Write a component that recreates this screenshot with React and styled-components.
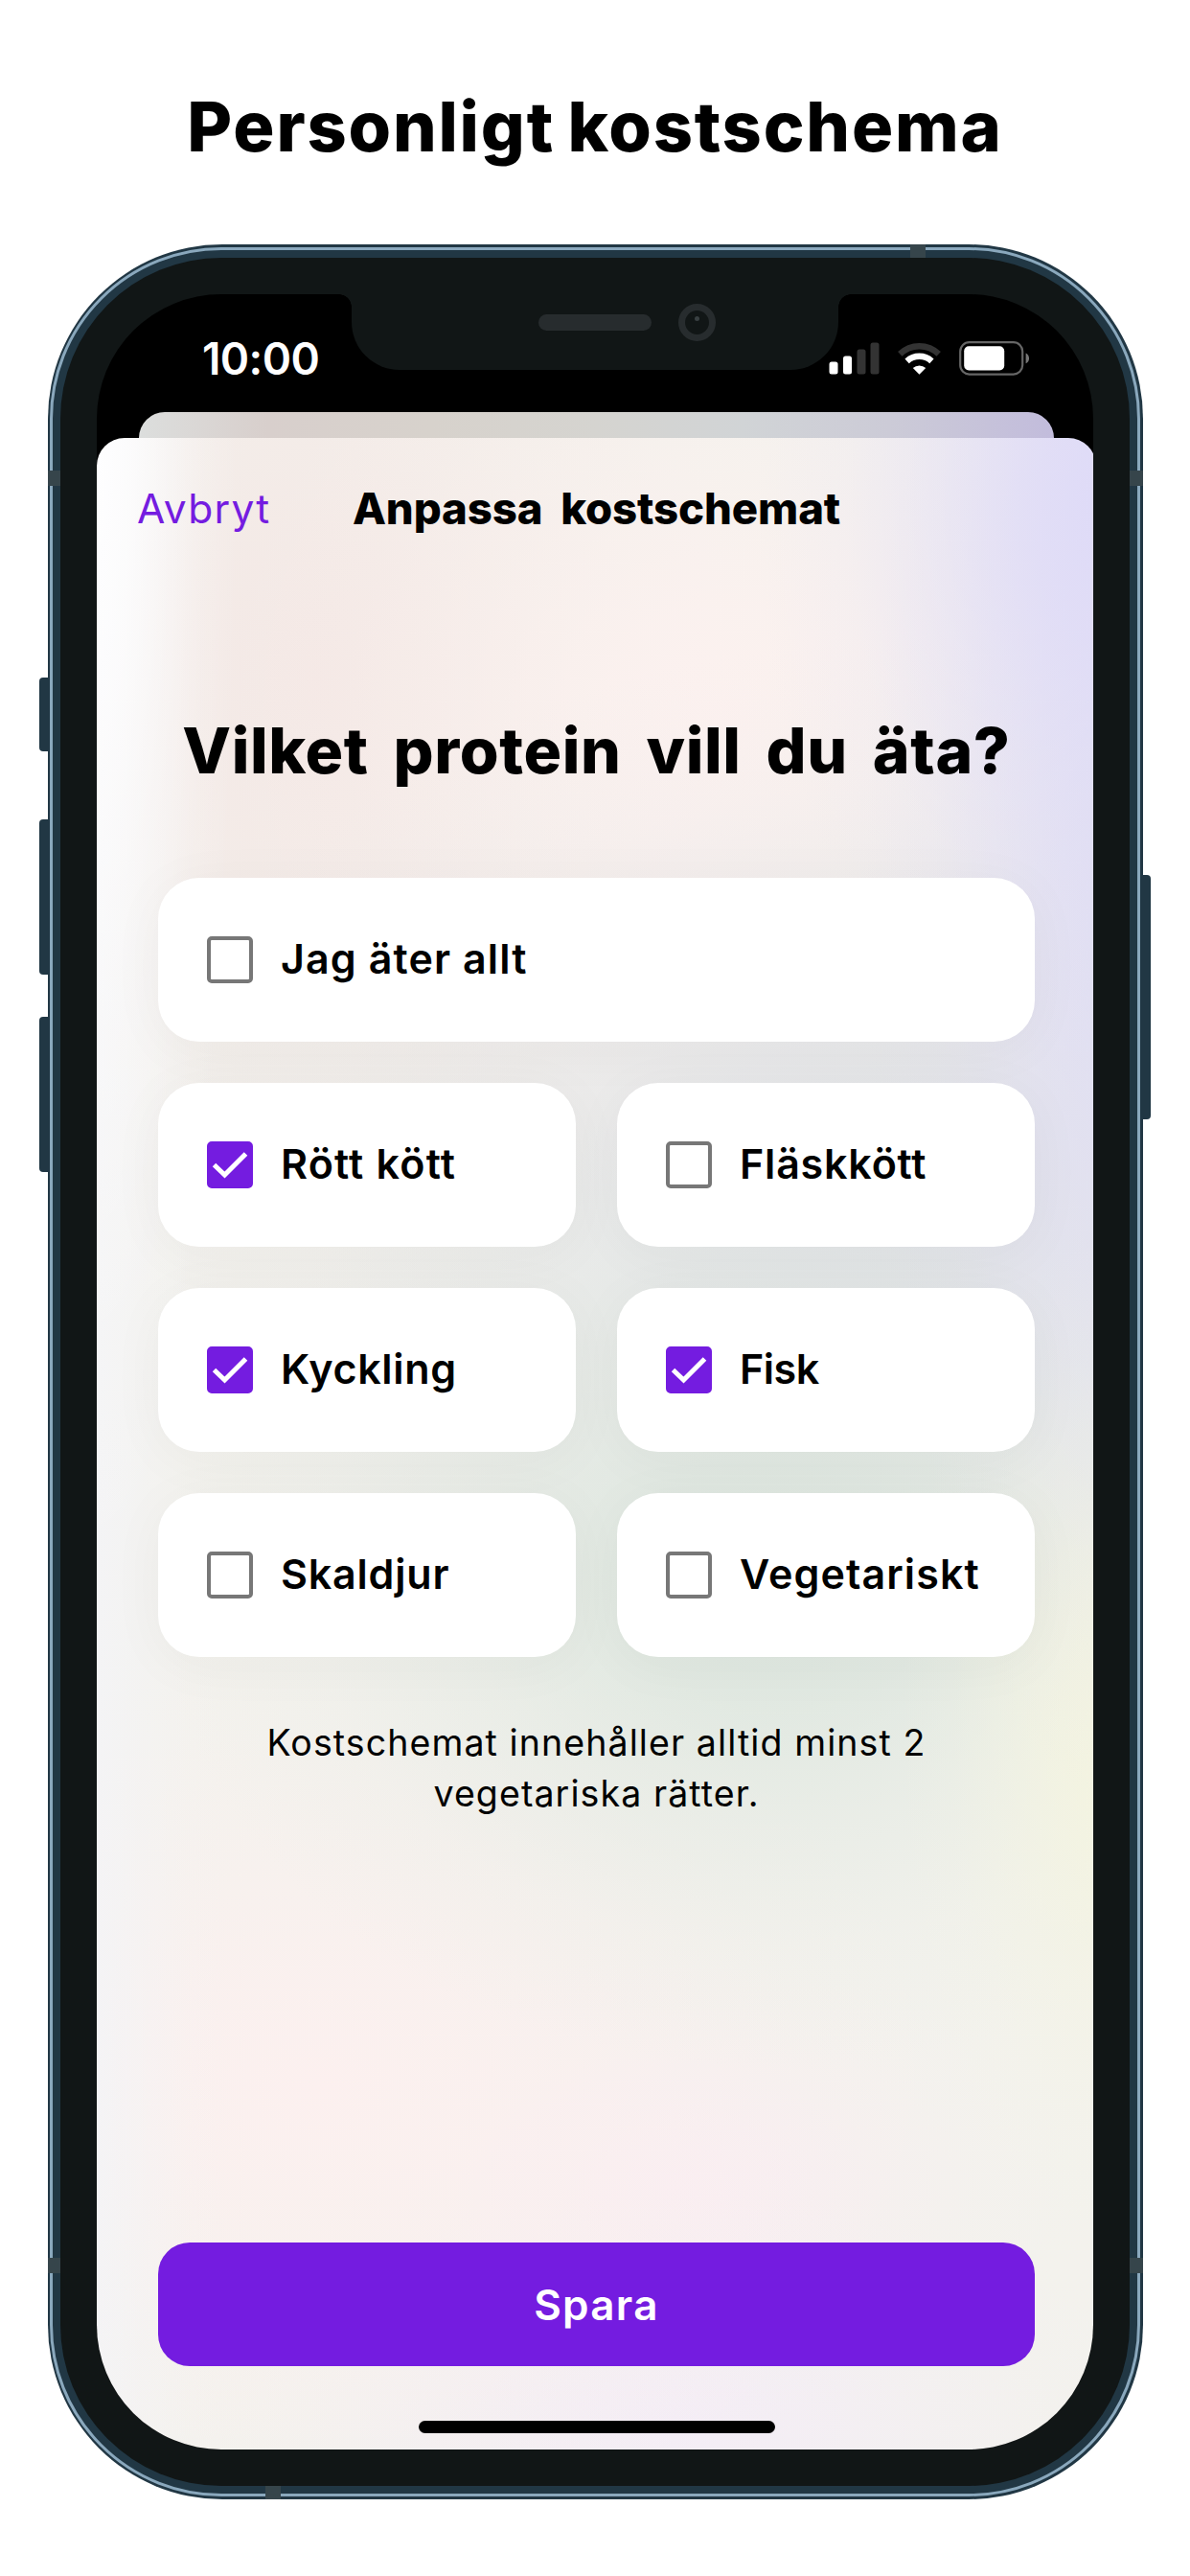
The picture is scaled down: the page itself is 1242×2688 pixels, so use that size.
import React, { useState } from "react";
import styled, { createGlobalStyle } from "styled-components";

const color = {
  accent: "#741ce0",
  ink: "#000",
  frame: "#213744",
  frameShine: "#8aa8bd",
  bezel: "#111616",
  antenna: "#36454b",
};

const glow = (size, at, rgb, strength = 1) =>
  `radial-gradient(${size} at ${at}, rgba(${rgb}, ${strength}) 0%, rgba(${rgb}, ${0.75 * strength}) 25%, rgba(${rgb}, ${0.4 * strength}) 50%, rgba(${rgb}, ${0.12 * strength}) 75%, rgba(${rgb}, 0) 100%)`;

const GlobalStyle = createGlobalStyle`
  *, *::before, *::after { box-sizing: border-box; }
  body {
    margin: 0;
    background: #fff;
    color: ${color.ink};
    font-family: Inter, "Liberation Sans", sans-serif;
  }
`;

const Page = styled.main`
  height: 2688px;
  display: flex;
  flex-direction: column;
  align-items: center;
`;

const Headline = styled.h1`
  margin: 87px 0 79px;
  font-size: 72px;
  line-height: 89px;
  font-weight: 800;
  letter-spacing: 1.8px;
  word-spacing: -4px;
  white-space: nowrap;
`;

const Device = styled.div`
  position: relative;
  width: 1143px;
  height: 2353px;
  padding: 3px 2.5px;
  background: ${color.frame};
  border-radius: 182px;
`;

const Ring = styled.div`
  height: 100%;
  padding: 8px;
  border: 3px solid ${color.frameShine};
  border-radius: 179px;
  background: ${color.frame};
`;

const Bezel = styled.div`
  height: 100%;
  padding: 38px;
  border-radius: 168px;
  background: ${color.bezel};
`;

const SideButton = styled.span`
  position: absolute;
  ${(p) => p.$side}: -8.5px;
  top: ${(p) => p.$top}px;
  width: 9px;
  height: ${(p) => p.$length}px;
  background: ${color.frame};
  border-radius: ${(p) => (p.$side === "left" ? "4px 0 0 4px" : "0 4px 4px 0")};
`;

const AntennaBand = styled.span`
  position: absolute;
  ${(p) => p.$edge}: 0;
  ${(p) => (p.$edge === "left" || p.$edge === "right" ? "top" : "left")}: ${(p) => p.$at}px;
  width: ${(p) => (p.$edge === "left" || p.$edge === "right" ? 13.5 : 16)}px;
  height: ${(p) => (p.$edge === "left" || p.$edge === "right" ? 16 : 14)}px;
  background: ${color.antenna};
`;

const Screen = styled.div`
  position: relative;
  height: 100%;
  display: flex;
  flex-direction: column;
  overflow: hidden;
  background: #000;
  border-radius: 130px;
`;

const Notch = styled.div`
  position: absolute;
  top: -1px;
  left: 266px;
  width: 508px;
  height: 80px;
  display: flex;
  align-items: center;
  padding: 0 128px 20px 195px;
  justify-content: space-between;
  background: ${color.bezel};
  border-radius: 0 0 50px 50px;

  &::before,
  &::after {
    content: "";
    position: absolute;
    top: 1px;
    width: 13px;
    height: 13px;
  }
  &::before {
    left: -13px;
    background: radial-gradient(circle at 0 100%, transparent 12.5px, ${color.bezel} 13px);
  }
  &::after {
    right: -13px;
    background: radial-gradient(circle at 100% 100%, transparent 12.5px, ${color.bezel} 13px);
  }
`;

const Speaker = styled.span`
  width: 118px;
  height: 17px;
  border-radius: 9px;
  background: #272c2e;
`;

const Camera = styled.span`
  width: 39px;
  height: 39px;
  display: flex;
  justify-content: center;
  padding-top: 6px;
  border: 7.5px solid #272c2e;
  border-radius: 50%;

  &::before {
    content: "";
    width: 5px;
    height: 5px;
    border-radius: 50%;
    background: #394042;
  }
`;

const StatusBar = styled.div`
  flex: none;
  height: 123px;
  display: flex;
  align-items: center;
  justify-content: space-between;
  padding: 11px 67px 0 110px;
  color: #fff;
`;

const Clock = styled.time`
  font-size: 46px;
  line-height: 56px;
  font-weight: 600;
  letter-spacing: -0.6px;
`;

const StatusIcons = styled.div`
  display: flex;
  align-items: center;

  svg { display: block; }
  svg + svg { margin-left: 19px; }
`;

const BackSheet = styled.div`
  flex: none;
  height: 57px;
  margin: 0 41px -30px 43.5px;
  border-radius: 27px 27px 0 0;
  background: linear-gradient(
    90deg,
    #dcdedd 0%,
    #d8cfcc 14%,
    #d7d2cc 32%,
    #d5d4d0 50%,
    #d1d4d6 66%,
    #cccbd7 82%,
    #c2bcdc 100%
  );
`;

const Sheet = styled.section`
  position: relative;
  flex: 1;
  width: 1043px;
  display: flex;
  flex-direction: column;
  padding: 0 64px 17px;
  border-radius: 29px 29px 0 0;
  background:
    ${glow("150px 1250px", "0 0", "254, 254, 255")},
    linear-gradient(90deg, rgba(244, 244, 246, 0.9) 0, rgba(244, 244, 246, 0.45) 50px, rgba(244, 244, 246, 0.12) 95px, rgba(244, 244, 246, 0) 140px),
    ${glow("36% 30%", "102% 3%", "222, 218, 248")},
    ${glow("26% 44%", "103% 24%", "224, 222, 243")},
    ${glow("22% 26%", "102% 65%", "244, 244, 224")},
    ${glow("62% 24%", "68% 57%", "220, 230, 222")},
    ${glow("80% 28%", "82% 38%", "225, 227, 231")},
    ${glow("50% 26%", "62% 14%", "252, 241, 239")},
    ${glow("50% 34%", "22% 12%", "244, 232, 229")},
    ${glow("66% 24%", "22% 82%", "252, 240, 239")},
    ${glow("50% 12%", "58% 99%", "244, 237, 246")},
    ${glow("40% 12%", "58% 87%", "249, 237, 242")},
    #f3f2ed;
`;

const SheetHeader = styled.header`
  flex: none;
  height: 147px;
  margin: 0 -22px;
  display: grid;
  grid-template-columns: 1fr auto 1fr;
  align-items: center;
`;

const CancelButton = styled.button`
  justify-self: start;
  padding: 0;
  border: 0;
  background: none;
  color: ${color.accent};
  font: 400 42.5px/50px Inter, "Liberation Sans", sans-serif;
  letter-spacing: 1.3px;
`;

const SheetTitle = styled.h2`
  margin: 0;
  font-size: 45.5px;
  line-height: 56px;
  font-weight: 800;
  letter-spacing: -0.1px;
  word-spacing: 9px;
  white-space: nowrap;
`;

const Question = styled.h3`
  margin: 139px -20px 93px;
  font-size: 66px;
  line-height: 80px;
  font-weight: 800;
  letter-spacing: 0.6px;
  word-spacing: 11px;
  text-align: center;
  white-space: nowrap;
`;

const Options = styled.div`
  display: grid;
  grid-template-columns: 1fr 1fr;
  grid-auto-rows: 171px;
  gap: 43px;
`;

const OptionCard = styled.label`
  grid-column: ${(p) => (p.$wide ? "1 / -1" : "auto")};
  display: flex;
  align-items: center;
  padding-left: 51px;
  background: #fff;
  border-radius: 43px;
  box-shadow: 0 8px 60px rgba(60, 50, 50, 0.04);
  font-size: 43px;
  font-weight: 600;
  white-space: nowrap;
`;

const HiddenInput = styled.input`
  appearance: none;
  width: 0;
  height: 0;
  margin: 0;
`;

const Box = styled.span`
  flex: none;
  width: 48px;
  height: 49px;
  margin-right: 29px;
  display: grid;
  place-items: center;
  border: 4px solid ${(p) => (p.$checked ? color.accent : "#777")};
  border-radius: 5px;
  background: ${(p) => (p.$checked ? color.accent : "#fff")};
`;

const OptionText = styled.span`
  margin-top: -3px;
  letter-spacing: ${(p) => p.$tracking}px;
`;

const Footnote = styled.p`
  width: 760px;
  margin: 63px auto 0;
  font-size: 37.5px;
  line-height: 53px;
  letter-spacing: 1.1px;
  text-align: center;
`;

const SaveButton = styled.button`
  height: 129px;
  margin-top: auto;
  border: 0;
  border-radius: 33px;
  background: ${color.accent};
  color: #fff;
  font: 600 44px/50px Inter, "Liberation Sans", sans-serif;
  letter-spacing: 1.3px;
`;

const HomeIndicator = styled.div`
  align-self: center;
  width: 372px;
  height: 13px;
  margin-top: 57px;
  border-radius: 7px;
  background: #000;
`;

const SignalIcon = () => (
  <svg width="53" height="34" viewBox="0 0 53 34">
    <rect x="0.5" y="20.5" width="9" height="13" rx="2.5" fill="#fff" />
    <rect x="15" y="14.5" width="9" height="19" rx="2.5" fill="#fff" />
    <rect x="29.5" y="7.5" width="9" height="26" rx="2.5" fill="#333" />
    <rect x="43.5" y="0.5" width="9" height="33" rx="2.5" fill="#333" />
  </svg>
);

const WifiIcon = () => (
  <svg width="45" height="34" viewBox="0 0 45 34" fill="none">
    <path d="M2.3 12.4a29 29 0 0 1 40.4 0" stroke="#333" strokeWidth="6.4" />
    <path d="M9.6 19.8a19 19 0 0 1 25.8 0" stroke="#fff" strokeWidth="6.4" />
    <path d="M15.8 27a10 10 0 0 1 13.4 0l-6.7 6.8Z" fill="#fff" />
  </svg>
);

const BatteryIcon = () => (
  <svg width="73" height="36" viewBox="0 0 73 36">
    <rect x="1.2" y="1.2" width="65" height="33.4" rx="9.5" fill="none" stroke="#666" strokeWidth="2.2" />
    <rect x="5.2" y="5.2" width="42" height="25.2" rx="5" fill="#fff" />
    <path d="M69.6 12.6c4.6 2 4.6 8.6 0 10.6Z" fill="#777" />
  </svg>
);

const CheckMark = () => (
  <svg width="40" height="40" viewBox="0 0 40 40" fill="none">
    <path d="M3.5 19.5 14.5 30 36.5 8" stroke="#fff" strokeWidth="5" />
  </svg>
);

const proteins = [
  { id: "all", label: "Jag äter allt", wide: true, tracking: 1.1 },
  { id: "red", label: "Rött kött", checked: true, tracking: 1.2 },
  { id: "pork", label: "Fläskkött", tracking: 0.8 },
  { id: "chicken", label: "Kyckling", checked: true, tracking: 0.7 },
  { id: "fish", label: "Fisk", checked: true, tracking: -0.5 },
  { id: "shellfish", label: "Skaldjur", tracking: 0.8 },
  { id: "veg", label: "Vegetariskt", tracking: 1.1 },
];

function Option({ label, wide, tracking, checked, onToggle }) {
  return (
    <OptionCard $wide={wide}>
      <HiddenInput type="checkbox" checked={checked} onChange={onToggle} />
      <Box $checked={checked}>{checked && <CheckMark />}</Box>
      <OptionText $tracking={tracking}>{label}</OptionText>
    </OptionCard>
  );
}

export default function App() {
  const [selected, setSelected] = useState(
    () => new Set(proteins.filter((p) => p.checked).map((p) => p.id))
  );
  const toggle = (id) =>
    setSelected((prev) => {
      const next = new Set(prev);
      if (!next.delete(id)) next.add(id);
      return next;
    });

  return (
    <>
      <GlobalStyle />
      <Page>
        <Headline>Personligt kostschema</Headline>
        <Device>
          <SideButton $side="left" $top={452} $length={77} />
          <SideButton $side="left" $top={600} $length={162} />
          <SideButton $side="left" $top={806} $length={162} />
          <SideButton $side="right" $top={658} $length={255} />
          <Ring>
            <Bezel>
              <Screen>
                <StatusBar>
                  <Clock>10:00</Clock>
                  <StatusIcons>
                    <SignalIcon />
                    <WifiIcon />
                    <BatteryIcon />
                  </StatusIcons>
                </StatusBar>
                <BackSheet />
                <Sheet>
                  <SheetHeader>
                    <CancelButton>Avbryt</CancelButton>
                    <SheetTitle>Anpassa kostschemat</SheetTitle>
                  </SheetHeader>
                  <Question>Vilket protein vill du äta?</Question>
                  <Options>
                    {proteins.map((p) => (
                      <Option
                        key={p.id}
                        label={p.label}
                        wide={p.wide}
                        tracking={p.tracking}
                        checked={selected.has(p.id)}
                        onToggle={() => toggle(p.id)}
                      />
                    ))}
                  </Options>
                  <Footnote>
                    Kostschemat innehåller alltid minst 2
                    <br />
                    vegetariska rätter.
                  </Footnote>
                  <SaveButton>Spara</SaveButton>
                  <HomeIndicator />
                </Sheet>
                <Notch>
                  <Speaker />
                  <Camera />
                </Notch>
              </Screen>
            </Bezel>
          </Ring>
          <AntennaBand $edge="left" $at={236} />
          <AntennaBand $edge="right" $at={236} />
          <AntennaBand $edge="left" $at={2101} />
          <AntennaBand $edge="right" $at={2101} />
          <AntennaBand $edge="top" $at={900} />
          <AntennaBand $edge="bottom" $at={227} />
        </Device>
      </Page>
    </>
  );
}
